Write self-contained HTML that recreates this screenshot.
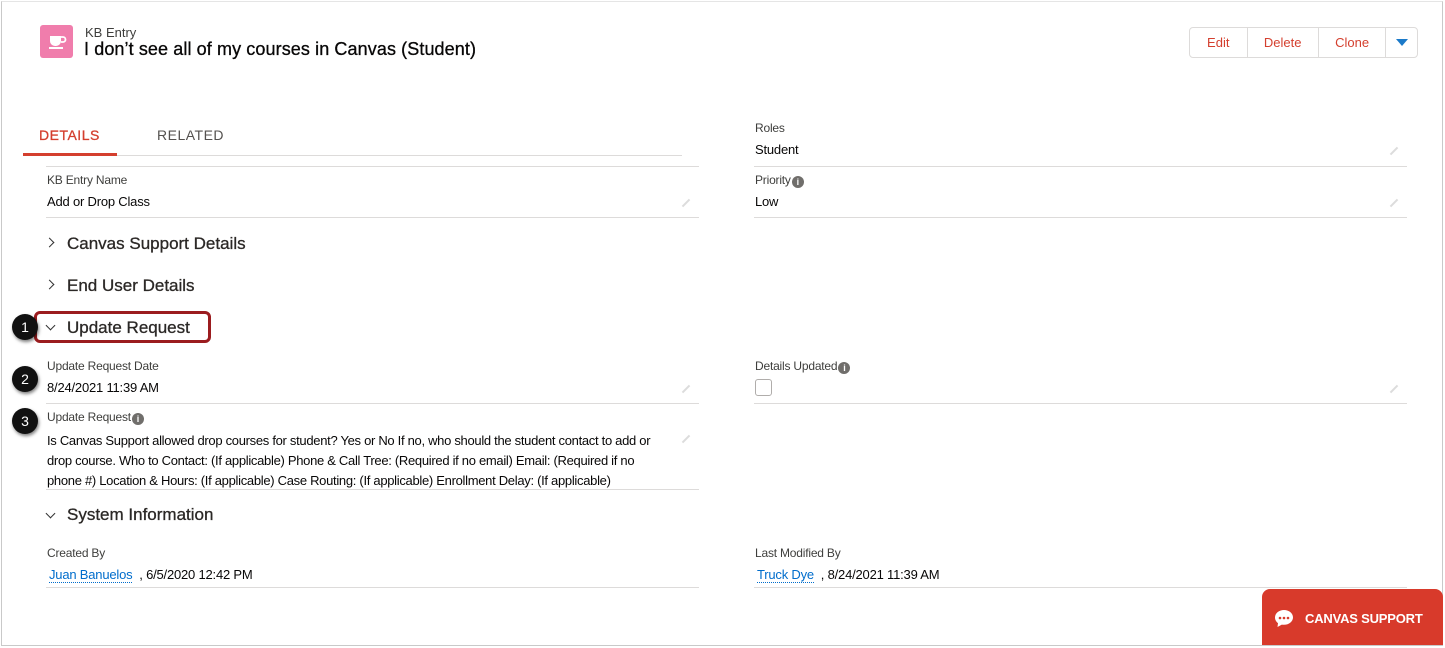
<!DOCTYPE html>
<html><head><meta charset="utf-8"><style>
*{box-sizing:border-box;margin:0;padding:0}
body{width:1445px;height:648px;background:#fff;font-family:"Liberation Sans",sans-serif;color:#181818;position:relative;overflow:hidden}
.frame{position:absolute;left:1px;top:1px;width:1442px;height:645px;border:1px solid #c9c9c9;border-top-color:#e5e5e5}
.a{position:absolute;white-space:nowrap}
.lbl{font-size:12px;color:#3e3e3c;letter-spacing:-.2px}
.val{font-size:13px;color:#080707;letter-spacing:-.2px}
.line{position:absolute;height:1px;background:#dddbda}
.sec{font-size:17px;color:#2b2826;-webkit-text-stroke:.3px #2b2826}
.info{display:inline-block;width:12px;height:12px;border-radius:50%;background:#706e6b;color:#fff;font-size:9px;font-weight:bold;text-align:center;line-height:12px;vertical-align:-1px;margin-left:1px}
.pen{position:absolute;width:10px;height:2px;background:#dcdcdc;transform:rotate(-45deg)}
.num{position:absolute;width:26px;height:26px;border-radius:50%;background:#111;color:#fff;font-size:14px;text-align:center;line-height:26px;box-shadow:1px 2px 3px rgba(0,0,0,.5)}
.chev{position:absolute;width:7px;height:7px;border-right:1.6px solid #333;border-bottom:1.6px solid #333}
.btn{position:absolute;top:27px;height:31px;border:1px solid #dddbda;border-radius:4px;display:flex;overflow:hidden;font-size:13px;color:#d43f2e}
.btn div{border-right:1px solid #dddbda;display:flex;align-items:center;justify-content:center}
a{color:#006dcc;text-decoration:none}
</style></head><body>
<div class="frame"></div>
<div class="a" style="left:40px;top:25px;width:33px;height:33px;background:#f07dac;border-radius:3px"></div>
<svg class="a" style="left:40px;top:25px" width="33" height="33"><path d="M10 11h11v5a5 5 0 0 1-5 5h-1a5 5 0 0 1-5-5z" fill="#fff"/><path d="M21 12h2a2.5 2.5 0 0 1 0 5h-2" stroke="#fff" stroke-width="1.8" fill="none"/><rect x="9" y="22" width="14" height="2" fill="#fff"/></svg>
<div class="a" style="left:85px;top:25px;font-size:13px;color:#3e3e3c">KB Entry</div>
<div class="a" style="left:84px;top:39px;font-size:18px;color:#080707;-webkit-text-stroke:.3px #080707;letter-spacing:.1px">I don’t see all of my courses in Canvas (Student)</div>
<div class="btn" style="left:1189px;width:229px">
<div style="width:58px">Edit</div><div style="width:72px">Delete</div><div style="width:68px">Clone</div>
<div style="width:31px;border:none"><svg width="12" height="8"><path d="M0 0h12L6 7z" fill="#1b7ac9"/></svg></div></div>
<div class="a" style="left:39px;top:127px;font-size:14px;color:#d43f2e;letter-spacing:.5px;-webkit-text-stroke:.3px #d43f2e">DETAILS</div>
<div class="a" style="left:157px;top:127px;font-size:14px;color:#54514f;letter-spacing:.5px">RELATED</div>
<div class="line" style="left:23px;top:155px;width:659px"></div>
<div class="a" style="left:23px;top:153px;width:94px;height:3px;background:#d43f2e"></div>
<div class="line" style="left:46px;top:166px;width:653px"></div>
<div class="a lbl" style="left:47px;top:173px">KB Entry Name</div>
<div class="a val" style="left:47px;top:194px">Add or Drop Class</div>
<div class="pen" style="left:681px;top:202px"></div>
<div class="line" style="left:46px;top:217px;width:653px"></div>
<div class="a lbl" style="left:755px;top:121px">Roles</div>
<div class="a val" style="left:755px;top:142px">Student</div>
<div class="pen" style="left:1389px;top:150px"></div>
<div class="line" style="left:754px;top:166px;width:653px"></div>
<div class="a lbl" style="left:755px;top:173px">Priority<span class="info">i</span></div>
<div class="a val" style="left:755px;top:194px">Low</div>
<div class="pen" style="left:1389px;top:202px"></div>
<div class="line" style="left:754px;top:217px;width:653px"></div>
<div class="chev" style="left:46px;top:239px;transform:rotate(-45deg)"></div>
<div class="a sec" style="left:67px;top:234px">Canvas Support Details</div>
<div class="chev" style="left:46px;top:281px;transform:rotate(-45deg)"></div>
<div class="a sec" style="left:67px;top:276px">End User Details</div>
<div class="a" style="left:34px;top:311px;width:177px;height:32px;border:3px solid #9b1c1f;border-radius:6px"></div>
<div class="chev" style="left:47px;top:322px;transform:rotate(45deg)"></div>
<div class="a sec" style="left:67px;top:318px">Update Request</div>
<div class="num" style="left:12px;top:314px">1</div>
<div class="num" style="left:12px;top:366px">2</div>
<div class="num" style="left:12px;top:408px">3</div>
<div class="a lbl" style="left:47px;top:359px">Update Request Date</div>
<div class="a val" style="left:47px;top:380px">8/24/2021 11:39 AM</div>
<div class="pen" style="left:681px;top:388px"></div>
<div class="line" style="left:46px;top:403px;width:653px"></div>
<div class="a lbl" style="left:755px;top:359px">Details Updated<span class="info">i</span></div>
<div class="a" style="left:755px;top:379px;width:17px;height:17px;border:1px solid #b0adab;border-radius:3px"></div>
<div class="pen" style="left:1389px;top:388px"></div>
<div class="line" style="left:754px;top:403px;width:653px"></div>
<div class="a lbl" style="left:47px;top:410px">Update Request<span class="info">i</span></div>
<div class="a val" style="left:47px;top:431px;line-height:20px;letter-spacing:-.3px">Is Canvas Support allowed drop courses for student? Yes or No If no, who should the student contact to add or<br>drop course. Who to Contact: (If applicable) Phone &amp; Call Tree: (Required if no email) Email: (Required if no<br>phone #) Location &amp; Hours: (If applicable) Case Routing: (If applicable) Enrollment Delay: (If applicable)</div>
<div class="pen" style="left:681px;top:438px"></div>
<div class="line" style="left:46px;top:489px;width:653px"></div>
<div class="chev" style="left:47px;top:510px;transform:rotate(45deg)"></div>
<div class="a sec" style="left:67px;top:505px">System Information</div>
<div class="a lbl" style="left:47px;top:546px">Created By</div>
<div class="a val" style="left:49px;top:567px"><a style="border-bottom:1px dotted #006dcc">Juan Banuelos</a> &nbsp;, 6/5/2020 12:42 PM</div>
<div class="line" style="left:46px;top:587px;width:653px"></div>
<div class="a lbl" style="left:755px;top:546px">Last Modified By</div>
<div class="a val" style="left:757px;top:567px"><a style="border-bottom:1px dotted #006dcc">Truck Dye</a> &nbsp;, 8/24/2021 11:39 AM</div>
<div class="line" style="left:754px;top:587px;width:653px"></div>
<div class="a" style="left:1262px;top:589px;width:181px;height:56px;background:#d83a2b;border-radius:8px 8px 0 0"></div>
<svg class="a" style="left:1274px;top:609px" width="20" height="19"><path d="M10 1C5 1 1 4.3 1 8.5c0 2.3 1.2 4.3 3 5.6L3.5 18l4.3-2.4c.7.1 1.4.2 2.2.2 5 0 9-3.3 9-7.4S15 1 10 1z" fill="#fff"/><circle cx="6" cy="9" r="1.3" fill="#d83a2b"/><circle cx="10" cy="9" r="1.3" fill="#d83a2b"/><circle cx="14" cy="9" r="1.3" fill="#d83a2b"/></svg>
<div class="a" style="left:1305px;top:611px;font-size:13px;font-weight:bold;color:#fff;letter-spacing:-.2px">CANVAS SUPPORT</div>
</body></html>
